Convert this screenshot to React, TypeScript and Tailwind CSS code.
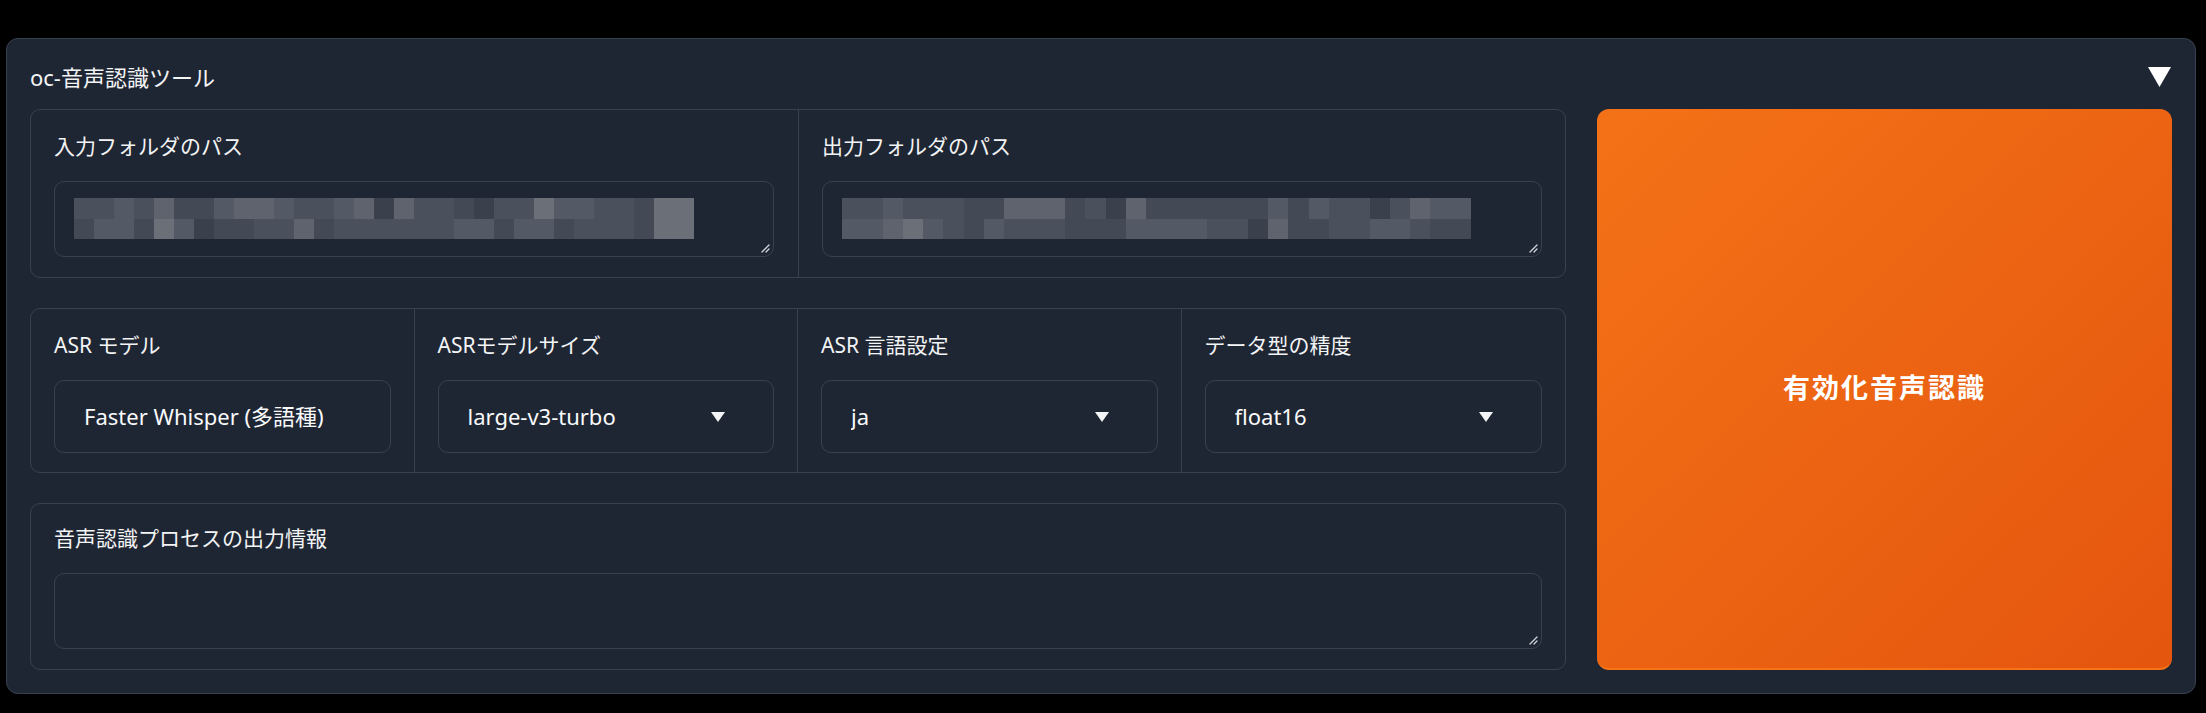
import React from 'react';

const font = "font-['Noto_Sans','Noto_Sans_CJK_JP',sans-serif]";

// pixelated (redacted) path text
const shades = [
  'bg-[#3a414d]',
  'bg-[#434a56]',
  'bg-[#4a505c]',
  'bg-[#535965]',
  'bg-[#5e636d]',
  'bg-[#6a6f78]',
];

const mosaicIn = [
  [2, 2, 3, 2, 4, 1, 1, 3, 4, 4, 3, 2, 2, 3, 4, 0, 4, 2, 2, 1, 0, 2, 2, 5, 3, 3, 2, 2, 1, 5, 5],
  [1, 3, 3, 1, 5, 3, 0, 1, 1, 2, 2, 4, 1, 2, 2, 2, 2, 2, 2, 3, 3, 1, 3, 3, 1, 2, 2, 2, 1, 5, 5],
];

const mosaicOut = [
  [2, 2, 3, 2, 2, 2, 1, 1, 4, 4, 4, 1, 2, 0, 4, 1, 1, 1, 1, 1, 1, 3, 1, 3, 2, 2, 0, 2, 4, 3, 3],
  [3, 3, 4, 5, 3, 2, 1, 3, 2, 2, 2, 1, 1, 1, 3, 3, 3, 3, 2, 2, 0, 4, 1, 1, 2, 2, 3, 3, 2, 1, 1],
];

function Mosaic({ rows, width }: { rows: number[][]; width: string }) {
  return (
    <div className={`grid grid-cols-[repeat(31,1fr)] ${width}`}>
      {rows.flat().map((s, i) => (
        <div key={i} className={`h-[20.5px] ${shades[s]}`} />
      ))}
    </div>
  );
}

function Grip() {
  return (
    <svg className="absolute right-[3px] bottom-[3px] w-[10px] h-[10px]" viewBox="0 0 10 10">
      <path d="M9 2 L2 9 M9 6 L6 9" stroke="#d1d5db" strokeWidth="1.3" strokeLinecap="round" />
    </svg>
  );
}

function TextBox({ children }: { children?: React.ReactNode }) {
  return (
    <div className="relative h-[76px] rounded-[10px] border border-[#384150] bg-[#1f2633] pl-[19px] pt-[16px]">
      {children}
      <Grip />
    </div>
  );
}

function Label({ text }: { text: string }) {
  return <div className="h-[30px] leading-[30px] text-[21px] text-[#f3f4f6] whitespace-nowrap">{text}</div>;
}

function Caret() {
  return (
    <svg className="w-[14px] h-[10px] shrink-0" viewBox="0 0 14 10">
      <path d="M0 0 H14 L7 10 Z" fill="#f3f4f6" />
    </svg>
  );
}

function Dropdown({ label, value, arrow = true }: { label: string; value: string; arrow?: boolean }) {
  return (
    <div className="flex flex-col gap-[20px] pt-[21px] pb-[19px] px-[23px]">
      <Label text={label} />
      <div className="flex items-center h-[73px] rounded-[10px] border border-[#384150] pl-[29px] pr-[48px] overflow-hidden">
        <div className="flex-1 overflow-hidden whitespace-nowrap text-[22px] text-[#f9fafb]">{value}</div>
        {arrow && <Caret />}
      </div>
    </div>
  );
}

export default function App() {
  return (
    <div className={`min-h-screen bg-black pt-[38px] pb-[20px] pl-[6px] pr-[10px] ${font}`}>
      <div className="rounded-[12px] border border-[#384150] bg-[#1f2633] px-[23px] pb-[23px]">
        {/* Header */}
        <div className="flex items-center justify-between h-[70px] pt-[6px] pr-[1px]">
          <span className="text-[22px] text-[#f3f4f6]">oc-音声認識ツール</span>
          <svg className="w-[23px] h-[20px]" viewBox="0 0 23 20">
            <path d="M0 0 H23 L11.5 20 Z" fill="#ffffff" />
          </svg>
        </div>

        <div className="flex gap-[31px]">
          {/* Settings */}
          <div className="flex-1 flex flex-col gap-[30px]">
            <div className="grid grid-cols-2 rounded-[10px] border border-[#384150]">
              <div className="flex flex-col gap-[20px] pt-[21px] pb-[20px] pl-[23px] pr-[24px]">
                <Label text="入力フォルダのパス" />
                <TextBox>
                  <Mosaic rows={mosaicIn} width="w-[620px]" />
                </TextBox>
              </div>
              <div className="flex flex-col gap-[20px] pt-[21px] pb-[20px] pl-[23px] pr-[23px] border-l border-[#384150]">
                <Label text="出力フォルダのパス" />
                <TextBox>
                  <Mosaic rows={mosaicOut} width="w-[629px]" />
                </TextBox>
              </div>
            </div>

            <div className="grid grid-cols-4 rounded-[10px] border border-[#384150] divide-x divide-[#384150]">
              <Dropdown label="ASR モデル" value="Faster Whisper (多語種)" arrow={false} />
              <Dropdown label="ASRモデルサイズ" value="large-v3-turbo" />
              <Dropdown label="ASR 言語設定" value="ja" />
              <Dropdown label="データ型の精度" value="float16" />
            </div>

            <div className="flex flex-col gap-[20px] pt-[19px] pb-[20px] px-[23px] rounded-[10px] border border-[#384150]">
              <Label text="音声認識プロセスの出力情報" />
              <TextBox />
            </div>
          </div>

          {/* Action */}
          <button className="w-[575px] flex items-center justify-center rounded-[12px] bg-gradient-to-br from-[#f47217] to-[#e4550e] border-b-2 border-[#f97316] text-white text-[27px] font-bold tracking-[2px]">
            有効化音声認識
          </button>
        </div>
      </div>
    </div>
  );
}
